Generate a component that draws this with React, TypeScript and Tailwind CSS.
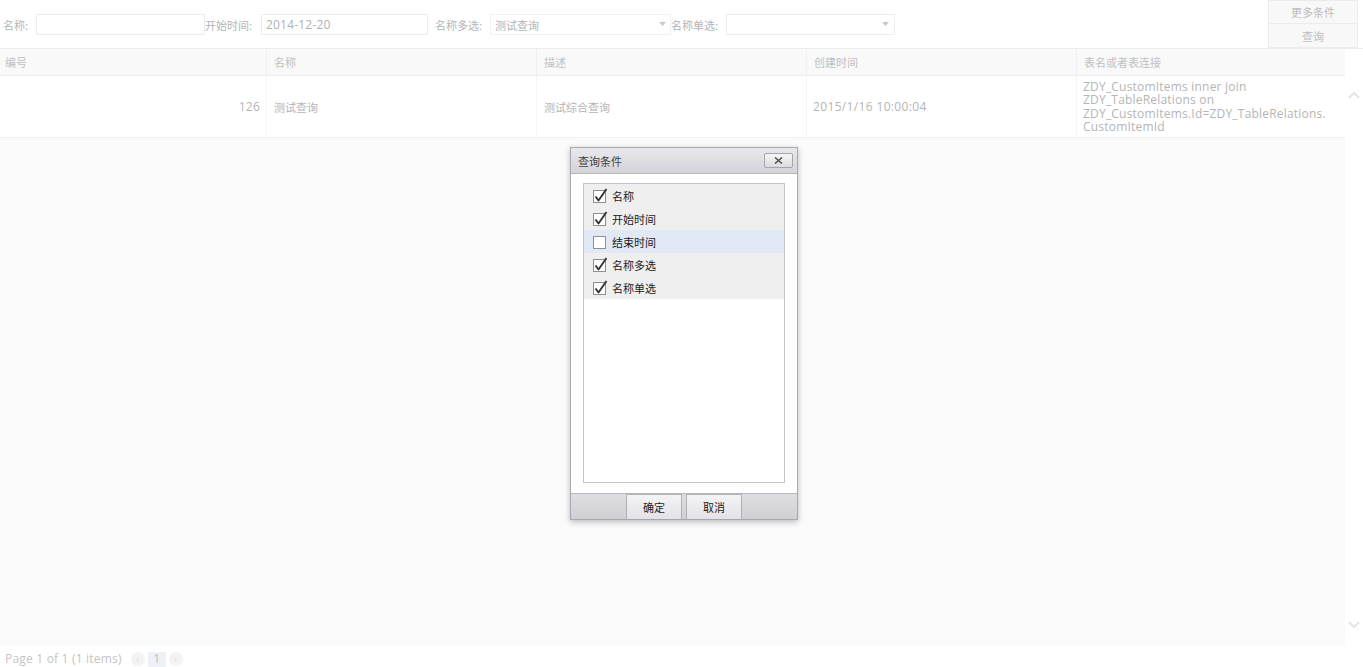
import { useState } from 'react';

const cjk = { fontFamily: '"Noto Sans CJK SC", sans-serif' };
const latin = { fontFamily: '"Open Sans", "Noto Sans CJK SC", sans-serif' };

const columns = ['编号', '名称', '描述', '创建时间', '表名或者表连接'];

const conditions = [
  { name: '名称', checked: true },
  { name: '开始时间', checked: true },
  { name: '结束时间', checked: false },
  { name: '名称多选', checked: true },
  { name: '名称单选', checked: true },
];

function Caret() {
  return (
    <svg width="7" height="4" viewBox="0 0 7 4" className="shrink-0">
      <path d="M0 0 L7 0 L3.5 4 Z" fill="#c9c9c9" />
    </svg>
  );
}

function CheckBox({ checked }: { checked: boolean }) {
  return (
    <svg width="16" height="16" viewBox="0 0 16 16" className="shrink-0">
      <rect x="0.5" y="2.5" width="12" height="12" fill="#fff" stroke="#8f8f8f" />
      {checked && <path d="M2.5 8.5 L5.5 12.5 L13.5 1" fill="none" stroke="#333" strokeWidth="1.9" strokeLinejoin="round" />}
    </svg>
  );
}

export default function App() {
  const [items, setItems] = useState(conditions);

  const toggle = (i: number) => {
    setItems(items.map((it, idx) => (idx === i ? { ...it, checked: !it.checked } : it)));
  };

  return (
    <div className="relative w-[1363px] h-[667px] overflow-hidden bg-[#fafafa] text-[11px]" style={cjk}>
      {/* toolbar */}
      <div className="flex h-[49px] bg-white border-b border-[#ececec]">
        <div className="flex items-center h-[48px] pl-[3px] text-[#b5b5b5]">
          <span className="w-[33px] pt-[2px]">名称:</span>
          <div className="w-[169px] h-[21px] border border-[#ededed] bg-white" />
          <span className="w-[56px] pt-[2px]">开始时间:</span>
          <div className="w-[167px] h-[21px] border border-[#ededed] bg-white flex items-center px-[4px] pt-[2px] text-[12px] tracking-[0.2px] text-[#b0b0b0]" style={latin}>2014-12-20</div>
          <span className="ml-[7px] w-[55px] pt-[2px]">名称多选:</span>
          <div className="w-[181px] h-[21px] border border-[#f2f2f2] bg-white flex items-center justify-between pl-[4px] pr-[4px]">
            <span className="pt-[2px]">测试查询</span>
            <Caret />
          </div>
          <span className="w-[55px] pt-[2px]">名称单选:</span>
          <div className="w-[169px] h-[21px] border border-[#ededed] bg-white flex items-center justify-end pr-[5px]">
            <Caret />
          </div>
        </div>
        <div className="ml-auto mr-[5px] w-[90px] flex flex-col text-[#bdbdbd]">
          <div className="h-[24px] flex items-center justify-center pt-[1px] bg-[#f8f8f8] border border-[#ececec]">更多条件</div>
          <div className="h-[24px] flex items-center justify-center pt-[1px] bg-[#f8f8f8] border border-t-0 border-[#ececec]">查询</div>
        </div>
      </div>

      {/* grid */}
      <div className="flex">
        <div className="w-[1345px]">
          <div className="grid grid-cols-[267px_270px_270px_270px_268px] h-[27px] bg-[#f9f9f9] border-b border-[#eeeeee] text-[#c0c0c0]">
            {columns.map((c, i) => (
              <div key={c} className={`flex items-center pt-[1px] ${i === 0 ? 'px-[5px]' : 'px-[7px]'} ${i < 4 ? 'border-r border-[#f0f0f0]' : ''}`}>{c}</div>
            ))}
          </div>
          <div className="grid grid-cols-[267px_270px_270px_270px_268px] h-[62px] bg-white border-b border-[#eeeeee] text-[#b5b5b5]">
            <div className="flex items-center justify-end px-[6px] pt-[1px] border-r border-[#f5f5f5] text-[12px] tracking-[0.2px]" style={latin}>126</div>
            <div className="flex items-center px-[7px] pt-[1px] border-r border-[#f5f5f5]">测试查询</div>
            <div className="flex items-center px-[7px] pt-[1px] border-r border-[#f5f5f5]">测试综合查询</div>
            <div className="flex items-center px-[6px] pt-[1px] border-r border-[#f5f5f5] text-[12px] tracking-[0.35px]" style={latin}>2015/1/16 10:00:04</div>
            <div className="flex flex-col justify-center px-[6px] text-[12px] tracking-[0.2px] leading-[13.4px] break-all" style={latin}>
              <span>ZDY_CustomItems inner join</span>
              <span>ZDY_TableRelations on</span>
              <span>ZDY_CustomItems.Id=ZDY_TableRelations.</span>
              <span>CustomItemId</span>
            </div>
          </div>
        </div>
        <div className="w-[18px] h-[596px] bg-white flex flex-col items-center justify-between pt-[42px] pb-[16px]">
          <svg width="12" height="8" viewBox="0 0 12 8"><path d="M1 7 L6 2 L11 7" fill="none" stroke="#e4e4e4" strokeWidth="2" /></svg>
          <svg width="12" height="8" viewBox="0 0 12 8"><path d="M1 1 L6 6 L11 1" fill="none" stroke="#e4e4e4" strokeWidth="2" /></svg>
        </div>
      </div>

      {/* pager */}
      <div className="absolute left-0 bottom-0 w-full h-[22px] bg-white flex items-center pt-[6px] pl-[5px] gap-[3px] text-[12px] tracking-[0.2px] text-[#c4c4c4]" style={latin}>
        <span className="mr-[6px]">Page 1 of 1 (1 items)</span>
        <span className="w-[14px] h-[14px] rounded-full bg-[#f3f3f3] flex items-center justify-center text-[9px] text-[#dadada]">‹</span>
        <span className="w-[18px] h-[15px] bg-[#eef1f6] flex items-center justify-center text-[#b8c0cc]">1</span>
        <span className="w-[14px] h-[14px] rounded-full bg-[#f3f3f3] flex items-center justify-center text-[9px] text-[#dadada]">›</span>
      </div>

      {/* dialog */}
      <div className="absolute left-[570px] top-[147px] w-[228px] h-[373px] flex flex-col border border-[#a8a8ac] bg-white shadow-[0_2px_6px_rgba(0,0,0,0.25)]">
        <div className="h-[26px] flex items-center justify-between pl-[7px] pr-[4px] bg-gradient-to-b from-[#e9e9ed] to-[#d2d2d8] border-b border-[#b5b5ba] text-[#444]">
          <span className="pt-[1px]">查询条件</span>
          <button className="w-[29px] h-[15px] flex items-center justify-center border border-[#a5a5aa] bg-gradient-to-b from-[#f5f5f7] to-[#dcdce0] rounded-[2px]">
            <svg width="9" height="7" viewBox="0 0 9 7"><path d="M1 0.5 L8 6.5 M8 0.5 L1 6.5" stroke="#555" strokeWidth="1.6" /></svg>
          </button>
        </div>
        <div className="flex-1 px-[12px] pt-[9px] pb-[10px]">
          <div className="h-full border border-[#c4c4c4] bg-white">
            {items.map((it, i) => (
              <div
                key={it.name}
                onClick={() => toggle(i)}
                className={`h-[23px] flex items-center pl-[9px] gap-[3px] text-[#222] cursor-pointer ${i === 2 ? 'bg-[#e1e9f7]' : 'bg-[#efefef]'}`}
              >
                <CheckBox checked={it.checked} />
                <span className="pt-[1px]">{it.name}</span>
              </div>
            ))}
          </div>
        </div>
        <div className="h-[26px] flex items-end justify-center gap-[4px] bg-gradient-to-b from-[#dedee2] to-[#cfcfd4] border-t border-[#b8b8bd]">
          <button className="w-[56px] h-[25px] pt-[1px] border border-[#b0b0b5] border-b-0 bg-gradient-to-b from-[#f4f4f6] to-[#e2e2e8] text-[#222]">确定</button>
          <button className="w-[56px] h-[25px] pt-[1px] border border-[#b0b0b5] border-b-0 bg-gradient-to-b from-[#f4f4f6] to-[#e2e2e8] text-[#222]">取消</button>
        </div>
      </div>
    </div>
  );
}
